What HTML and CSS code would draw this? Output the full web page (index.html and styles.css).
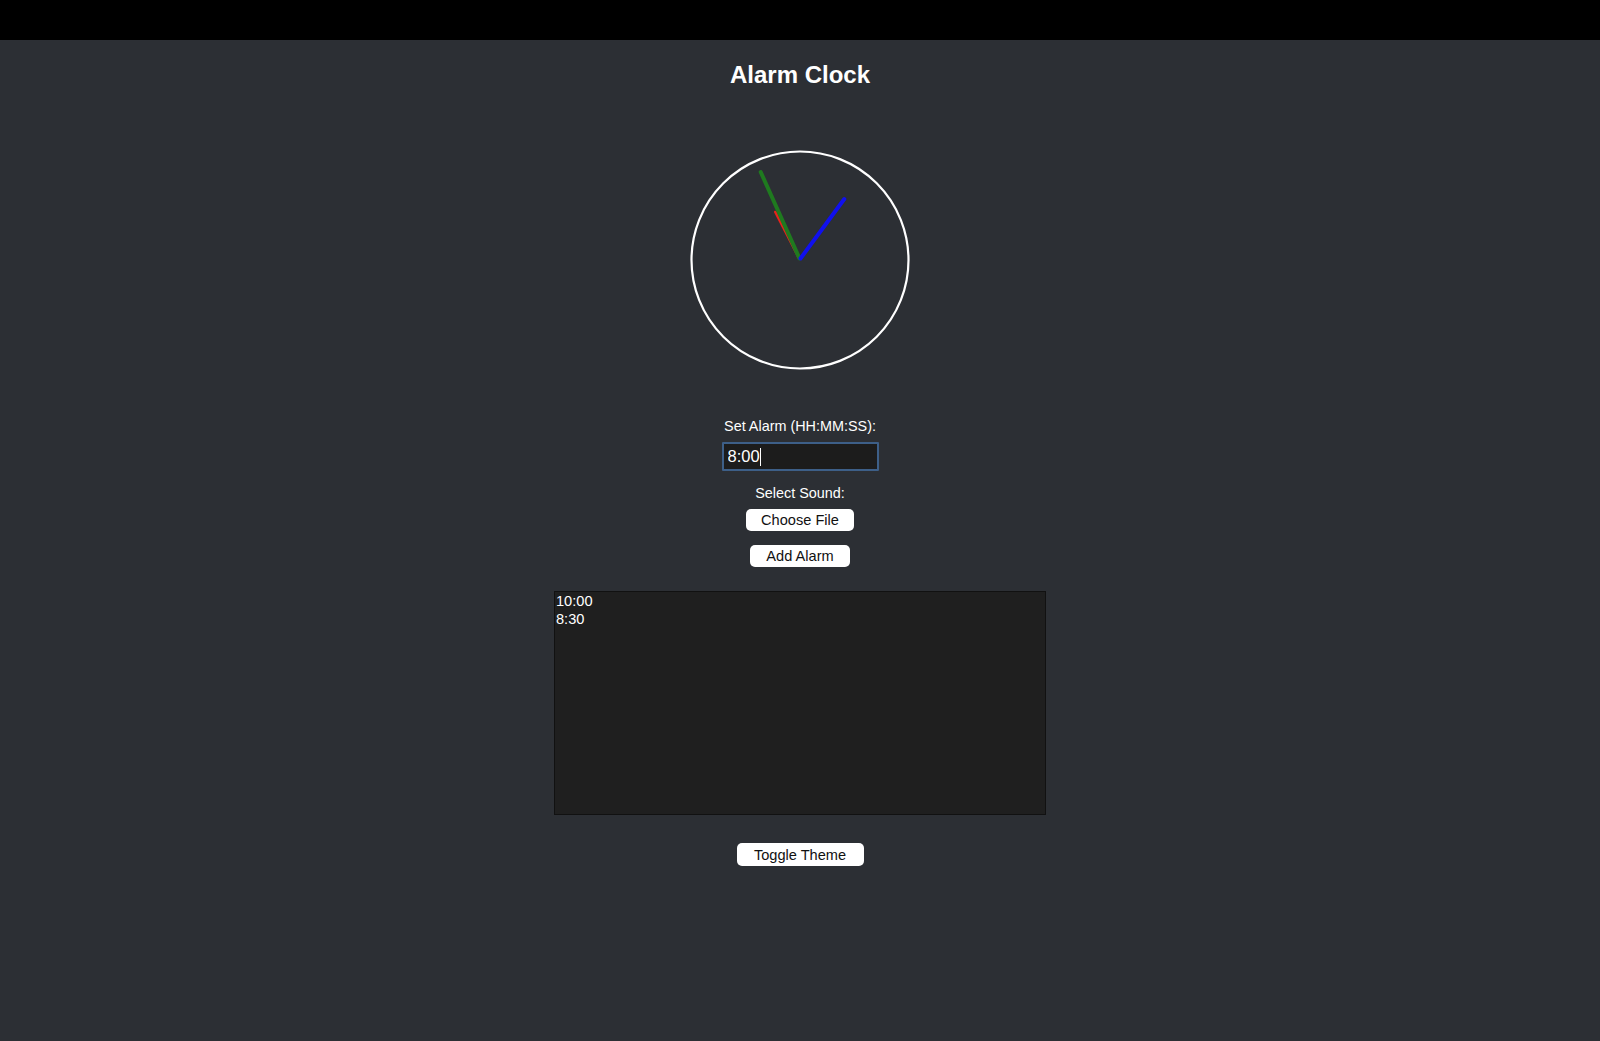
FILE: index.html
```html
<!DOCTYPE html>
<html lang="en">
<head>
<meta charset="utf-8">
<title>Alarm Clock</title>
<link rel="stylesheet" href="styles.css">
</head>
<body>
<div class="topbar"></div>
<main class="app">
  <h1 class="title">Alarm Clock</h1>
  <svg class="clock" width="220" height="220" viewBox="0 0 220 220">
    <circle cx="110" cy="110" r="108.5" fill="none" stroke="#ffffff" stroke-width="2.2"/>
    <line x1="109" y1="108" x2="85.3" y2="62" stroke="#e8231b" stroke-width="2.6" stroke-linecap="round"/>
    <line x1="109.5" y1="108.5" x2="70.7" y2="22" stroke="#1f7a1f" stroke-width="4" stroke-linecap="round"/>
    <line x1="110.5" y1="108.5" x2="154.3" y2="49" stroke="#1010ee" stroke-width="4" stroke-linecap="round"/>
  </svg>
  <label class="label label-alarm" for="alarm">Set Alarm (HH:MM:SS):</label>
  <div class="input-wrap">
    <input class="time-input" id="alarm" type="text" value="8:00">
    <span class="caret"></span>
  </div>
  <label class="label label-sound">Select Sound:</label>
  <button class="btn btn-file" type="button">Choose File</button>
  <button class="btn btn-add" type="button">Add Alarm</button>
  <div class="alarm-list">
    <div class="alarm-item">10:00</div>
    <div class="alarm-item">8:30</div>
  </div>
  <button class="btn btn-theme" type="button">Toggle Theme</button>
</main>
</body>
</html>
```
FILE: styles.css
```css
html, body {
  margin: 0;
  padding: 0;
}
body {
  background: #2c2f34;
  color: #ffffff;
  font-family: "Liberation Sans", Arial, sans-serif;
  min-height: 1041px;
}
.topbar {
  height: 40px;
  background: #000000;
}
.app {
  display: flex;
  flex-direction: column;
  align-items: center;
}
.title {
  margin: 21px 0 0;
  font-size: 24px;
  line-height: 28px;
  font-weight: bold;
  color: #ffffff;
}
.clock {
  display: block;
  margin-top: 61px;
}
.label {
  display: block;
  font-size: 14.4px;
  line-height: 16px;
  color: #ffffff;
}
.label-alarm {
  margin-top: 48px;
}
.input-wrap {
  position: relative;
  margin-top: 8px;
}
.time-input {
  display: block;
  box-sizing: border-box;
  width: 157px;
  height: 29px;
  padding: 0 4px;
  background: #1c1c1c;
  border: 2px solid #3d5f88;
  border-radius: 1px;
  color: #ffffff;
  font-family: "Liberation Sans", Arial, sans-serif;
  font-size: 16.5px;
  outline: none;
}
.caret {
  position: absolute;
  left: 38px;
  top: 6px;
  width: 1px;
  height: 18px;
  background: #ffffff;
}
.label-sound {
  margin-top: 14px;
}
.btn {
  box-sizing: border-box;
  height: 22px;
  padding: 0 14px;
  border: none;
  border-radius: 5px;
  background: #ffffff;
  color: #111111;
  font-family: "Liberation Sans", Arial, sans-serif;
  font-size: 14.6px;
  line-height: 22px;
  cursor: pointer;
}
.btn-file {
  margin-top: 8px;
  width: 108px;
}
.btn-add {
  margin-top: 14px;
  width: 100px;
}
.alarm-list {
  box-sizing: border-box;
  margin-top: 24px;
  width: 492px;
  height: 224px;
  background: #1f1f1f;
  border: 1px solid #111111;
  text-align: left;
  padding: 0 1px;
}
.alarm-item {
  font-size: 14.6px;
  line-height: 18px;
  color: #ffffff;
}
.btn-theme {
  margin-top: 28px;
  width: 127px;
  height: 23px;
}
```
